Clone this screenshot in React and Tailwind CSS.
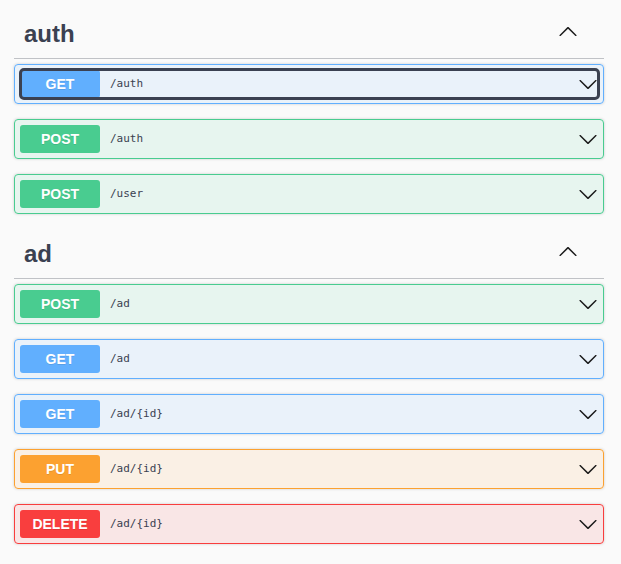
import React from "react";

const styles = {
  GET: { row: "border-[#61affe] bg-[#61affe]/10", badge: "bg-[#61affe]" },
  POST: { row: "border-[#49cc90] bg-[#49cc90]/10", badge: "bg-[#49cc90]" },
  PUT: { row: "border-[#fca130] bg-[#fca130]/10", badge: "bg-[#fca130]" },
  DELETE: { row: "border-[#f93e3e] bg-[#f93e3e]/10", badge: "bg-[#f93e3e]" },
};

function Arrow({ up = false }) {
  return (
    <svg
      width="20"
      height="20"
      viewBox="0 0 20 20"
      className={up ? "rotate-180 shrink-0" : "shrink-0"}
      fill="#1b1b1b"
    >
      <path d="M17.418 6.109c.272-.268.709-.268.979 0s.271.701 0 .969l-7.908 7.83c-.27.268-.707.268-.979 0l-7.908-7.83c-.27-.268-.27-.701 0-.969.271-.268.709-.268.979 0L10 13.25l7.418-7.141z" />
    </svg>
  );
}

function Op({ method, path, focused }) {
  const s = styles[method];
  return (
    <div
      className={`relative mb-[15px] rounded-[4px] border shadow-[0_0_3px_rgba(0,0,0,0.19)] ${s.row}`}
    >
      <div className="flex items-center p-[5px]">
        <div
          className={`flex h-[28px] w-[80px] shrink-0 items-center justify-center rounded-[3px] text-[14px] font-bold text-white [text-shadow:0_1px_0_rgba(0,0,0,0.1)] ${s.badge}`}
          style={{ fontFamily: '"Liberation Sans", Arial, sans-serif' }}
        >
          {method}
        </div>
        <div
          className="flex-1 px-[10px] pt-[1px] text-[11px] font-normal text-[#3b4151]"
          style={{ fontFamily: '"DejaVu Sans Mono", monospace' }}
        >
          {path}
        </div>
        <Arrow />
      </div>
      {focused && (
        <div className="pointer-events-none absolute top-[3px] right-[3px] bottom-[3px] left-[4px] rounded-[5px] border-[3px] border-[#3b4151]" />
      )}
    </div>
  );
}

function Section({ name, ops }) {
  return (
    <div>
      <div className="mb-[5px] flex h-[50px] items-center border-b border-[#3b4151]/30 pr-[26px] pl-[10px]">
        <h3
          className="flex-1 text-[24px] font-bold text-[#3b4151]"
          style={{ fontFamily: '"Liberation Sans", Arial, sans-serif' }}
        >
          {name}
        </h3>
        <div className="-mt-[3px]">
          <Arrow up />
        </div>
      </div>
      {ops.map((o, i) => (
        <Op key={i} {...o} />
      ))}
    </div>
  );
}

export default function App() {
  return (
    <div className="min-h-screen bg-[#fafafa] pt-[9px] pl-[14px]">
      <div className="w-[590px]">
        <Section
          name="auth"
          ops={[
            { method: "GET", path: "/auth", focused: true },
            { method: "POST", path: "/auth" },
            { method: "POST", path: "/user" },
          ]}
        />
        <Section
          name="ad"
          ops={[
            { method: "POST", path: "/ad" },
            { method: "GET", path: "/ad" },
            { method: "GET", path: "/ad/{id}" },
            { method: "PUT", path: "/ad/{id}" },
            { method: "DELETE", path: "/ad/{id}" },
          ]}
        />
      </div>
    </div>
  );
}
